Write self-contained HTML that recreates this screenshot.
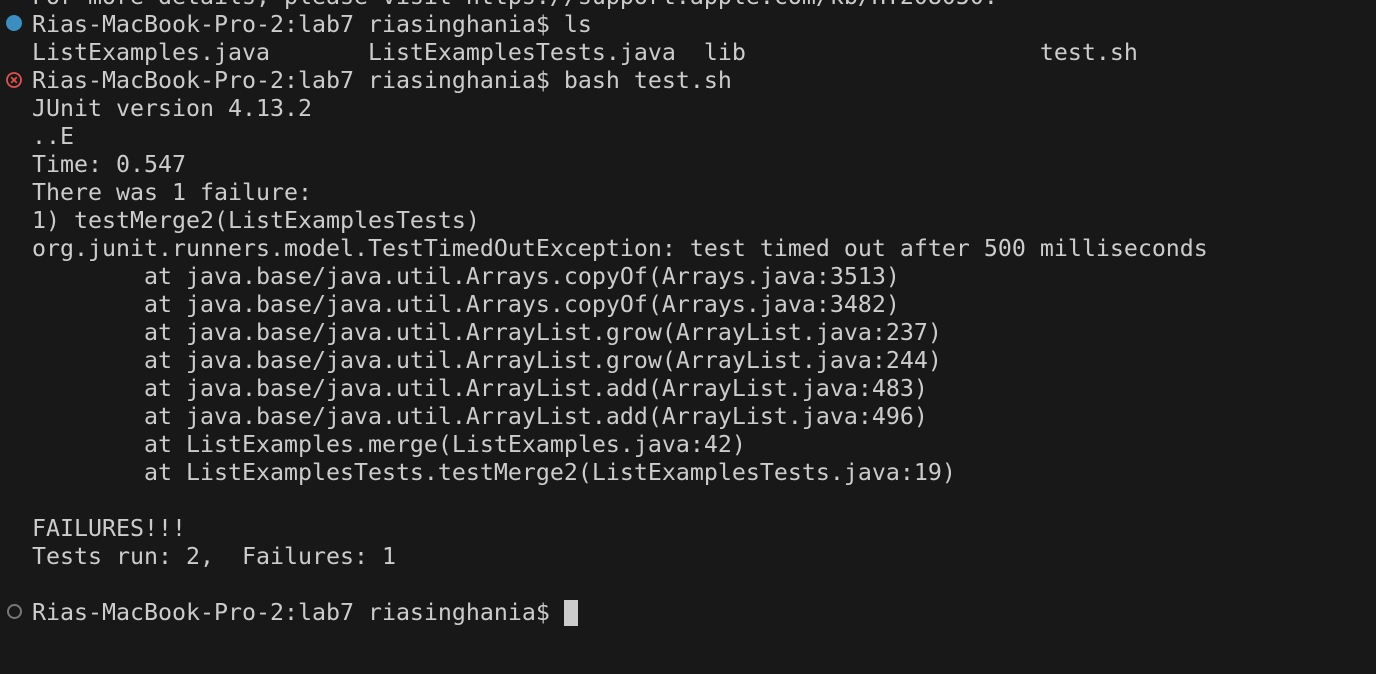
<!DOCTYPE html>
<html><head><meta charset="utf-8"><style>
html,body{margin:0;padding:0;background:#181818;width:1376px;height:674px;overflow:hidden}
pre{position:absolute;left:32px;top:-17px;margin:0;font-family:"DejaVu Sans Mono","Liberation Mono",monospace;font-size:23.25px;line-height:28px;color:#cccccc;tab-size:8;white-space:pre}
.ic{position:absolute;left:6px;width:16px;height:16px;border-radius:50%;box-sizing:border-box}
.cur{display:inline-block;width:14px;height:26px;background:#cccccc;vertical-align:-6px}
</style></head><body>
<div class="ic" style="top:15px;background:#3b8ebf"></div>
<svg style="position:absolute;left:5px;top:71px" width="18" height="18" viewBox="0 0 18 18"><circle cx="9" cy="9" r="7" fill="none" stroke="#e05252" stroke-width="1.8"/><path d="M6.2 6.2L11.8 11.8M11.8 6.2L6.2 11.8" stroke="#e05252" stroke-width="1.8"/></svg>
<div class="ic" style="top:604px;left:7px;width:15px;height:15px;border:2px solid #777"></div>
<pre>For more details, please visit https://support.apple.com/kb/HT208050.
Rias-MacBook-Pro-2:lab7 riasinghania$ ls
ListExamples.java       ListExamplesTests.java  lib                     test.sh
Rias-MacBook-Pro-2:lab7 riasinghania$ bash test.sh
JUnit version 4.13.2
..E
Time: 0.547
There was 1 failure:
1) testMerge2(ListExamplesTests)
org.junit.runners.model.TestTimedOutException: test timed out after 500 milliseconds
        at java.base/java.util.Arrays.copyOf(Arrays.java:3513)
        at java.base/java.util.Arrays.copyOf(Arrays.java:3482)
        at java.base/java.util.ArrayList.grow(ArrayList.java:237)
        at java.base/java.util.ArrayList.grow(ArrayList.java:244)
        at java.base/java.util.ArrayList.add(ArrayList.java:483)
        at java.base/java.util.ArrayList.add(ArrayList.java:496)
        at ListExamples.merge(ListExamples.java:42)
        at ListExamplesTests.testMerge2(ListExamplesTests.java:19)

FAILURES!!!
Tests run: 2,  Failures: 1

Rias-MacBook-Pro-2:lab7 riasinghania$ <span class="cur"></span></pre>
</body></html>
